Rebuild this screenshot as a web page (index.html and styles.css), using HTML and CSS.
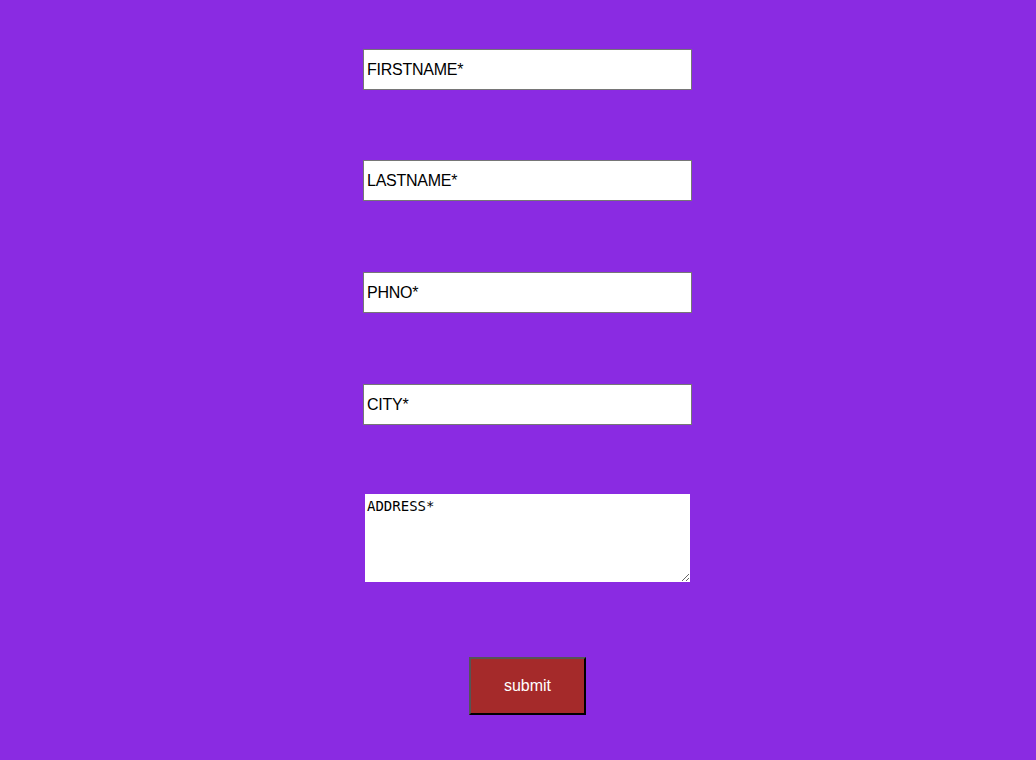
FILE: index.html
```html
<!DOCTYPE html>
<html>
<head>
<meta charset="utf-8">
<link rel="stylesheet" href="styles.css">
</head>
<body>
<form class="form">
  <input class="field field-first" type="text" placeholder="FIRSTNAME*">
  <input class="field" type="text" placeholder="LASTNAME*">
  <input class="field" type="text" placeholder="PHNO*">
  <input class="field field-last" type="text" placeholder="CITY*">
  <textarea class="area" placeholder="ADDRESS*"></textarea>
  <button class="submit" type="button">submit</button>
</form>
</body>
</html>
```
FILE: styles.css
```css
html, body {
  margin: 0;
  padding: 0;
  background: #8a2be2;
  height: 100%;
}
.form {
  display: flex;
  flex-direction: column;
  align-items: center;
  padding: 49px 0 0 19px;
}
.field {
  box-sizing: border-box;
  width: 329px;
  height: 41px;
  margin: 0 0 71px 0;
  padding: 0 3px;
  border: 1px solid #767676;
  background: #fff;
  font-family: "Liberation Sans", Arial, sans-serif;
  font-size: 16px;
  letter-spacing: -0.25px;
  color: #000;
  outline: none;
}
.field-first { margin-bottom: 70px; }
.field-last { margin-bottom: 69px; }
.field::placeholder { color: #000; opacity: 1; }
.area {
  box-sizing: border-box;
  width: 325px;
  height: 88px;
  margin: 0 0 75px 0;
  padding: 4px 2px;
  border: none;
  background: #fff;
  font-family: "DejaVu Sans Mono", monospace;
  font-size: 14px;
  color: #000;
  outline: none;
}
.area::placeholder { color: #000; opacity: 1; }
.submit {
  box-sizing: border-box;
  width: 117px;
  height: 58px;
  background: #a52a2a;
  color: #fff;
  font-family: "Liberation Sans", Arial, sans-serif;
  font-size: 16px;
  border-style: solid;
  border-width: 2px;
  border-color: #555 #000 #000 #555;
  padding: 0;
}
```
